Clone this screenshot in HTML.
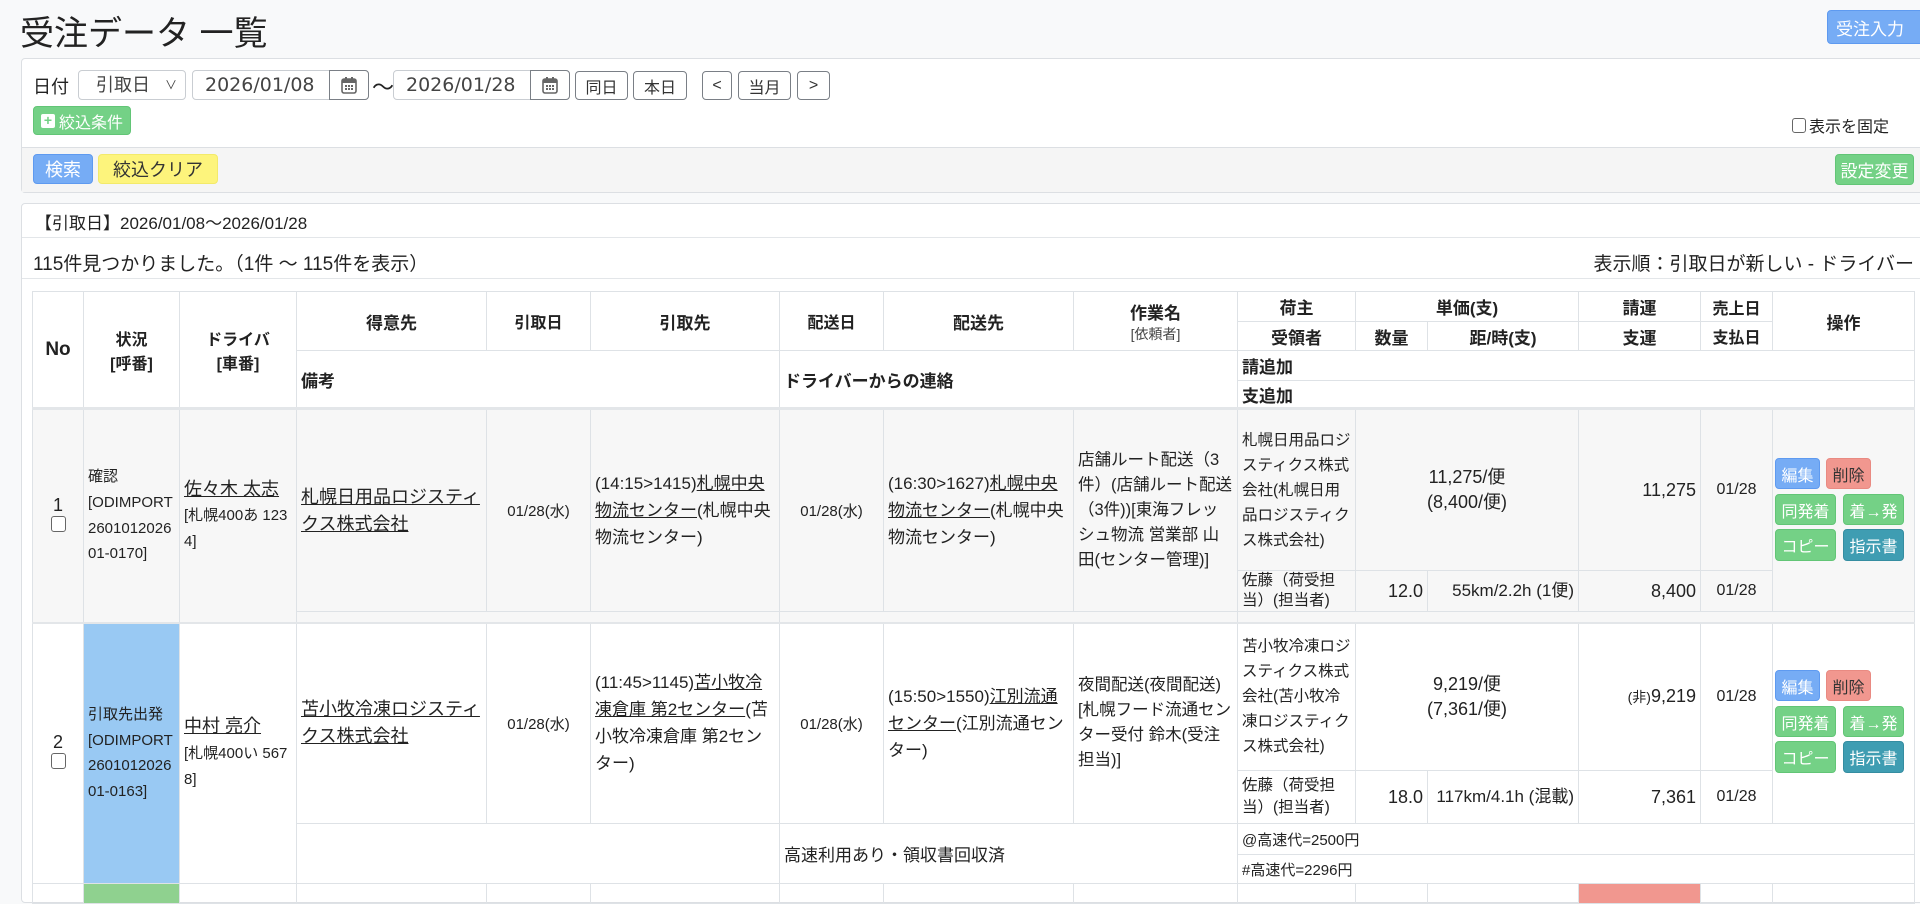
<!DOCTYPE html>
<html><head><meta charset="utf-8"><style>
*{box-sizing:border-box}
body{margin:0;width:1920px;height:887px;overflow:hidden;background:#f8f9fa;font-family:"Liberation Sans","Noto Sans CJK JP",sans-serif;color:#222;position:relative}
.abs{position:absolute}
h1{position:absolute;left:20px;top:6px;margin:0;font-size:34px;font-weight:normal;color:#222}
.btn{position:absolute;border-radius:4px;font-size:16px;display:flex;align-items:center;justify-content:center;white-space:nowrap}
.blue{background:#76acf5;color:#fff;border:1px solid #5e9af0}
.green{background:#74d186;color:#fff;border:1px solid #62c576}
.pink{background:#f1978f;color:#333;border:1px solid #e98a82}
.teal{background:#3f9db2;color:#fff;border:1px solid #358da1}
.yellow{background:#fdf47c;color:#333;border:1px solid #f3ea6a}
.out{background:#fff;border:1px solid #7a7f86;color:#333;font-size:16px}
.panel{position:absolute;left:21px;width:1910px;background:#fff;border:1px solid #dcdfe3;border-radius:4px}
.inp{position:absolute;top:70px;height:30px;border:1px solid #c9cdd2;border-radius:4px;background:#fff;font-size:19px;color:#444;padding-left:12px;line-height:28px;font-family:"DejaVu Sans",sans-serif}
.cal{position:absolute;right:-1px;top:-1px;width:40px;height:30px;border:1px solid #7a7f86;border-radius:0 4px 4px 0;background:#fff;display:flex;align-items:center;justify-content:center}
table{position:absolute;left:32px;top:291px;border-collapse:collapse;table-layout:fixed;width:1882px;font-size:16px}
td,th{border:1px solid #dee2e6;padding:0 4px;overflow:hidden}
th{font-weight:bold;text-align:center;font-size:17px}
th.l{text-align:left}
.sm{font-size:14px;font-weight:normal;color:#444}
.g td{background:#f7f7f7}
.c{text-align:center}.r{text-align:right}
u{text-decoration:underline}
.ba{word-break:break-all;line-height:25.7px;font-size:15px}
.big{font-size:17px;line-height:27px}
.lh{line-height:25px}
</style></head><body>
<h1>受注データ 一覧</h1>
<div class="btn blue" style="left:1827px;top:10px;width:100px;height:34px;font-size:17px;justify-content:flex-start;padding-left:8px">受注入力</div>

<div class="panel" style="top:58px;height:135px;background:#fff">
  <div class="abs" style="left:0;right:0;top:88px;bottom:0;background:#f5f5f5;border-top:1px solid #dcdfe3"></div>
</div>
<div class="abs" style="left:33px;top:73px;font-size:18px">日付</div>
<div class="abs" style="left:78px;top:70px;width:108px;height:30px;border:1px solid #c9cdd2;border-radius:4px;background:#fff;font-size:18px;color:#444;padding-left:17px;line-height:28px">引取日<span style="position:absolute;right:8px;font-size:12px">&#8744;</span></div>
<div class="inp" style="left:192px;width:177px">2026/01/08<div class="cal"><svg width="16" height="18" viewBox="0 0 16 18"><rect x="1" y="3" width="14" height="14" rx="2" fill="none" stroke="#666" stroke-width="1.6"/><rect x="1" y="3" width="14" height="4" fill="#666"/><rect x="4" y="1" width="2" height="4" fill="#666"/><rect x="10" y="1" width="2" height="4" fill="#666"/><g fill="#666"><rect x="4" y="9" width="2" height="2"/><rect x="7" y="9" width="2" height="2"/><rect x="10" y="9" width="2" height="2"/><rect x="4" y="12" width="2" height="2"/><rect x="7" y="12" width="2" height="2"/><rect x="10" y="12" width="2" height="2"/></g></svg></div></div>
<div class="abs" style="left:372px;top:70px;font-size:22px">〜</div>
<div class="inp" style="left:393px;width:177px">2026/01/28<div class="cal"><svg width="16" height="18" viewBox="0 0 16 18"><rect x="1" y="3" width="14" height="14" rx="2" fill="none" stroke="#666" stroke-width="1.6"/><rect x="1" y="3" width="14" height="4" fill="#666"/><rect x="4" y="1" width="2" height="4" fill="#666"/><rect x="10" y="1" width="2" height="4" fill="#666"/><g fill="#666"><rect x="4" y="9" width="2" height="2"/><rect x="7" y="9" width="2" height="2"/><rect x="10" y="9" width="2" height="2"/><rect x="4" y="12" width="2" height="2"/><rect x="7" y="12" width="2" height="2"/><rect x="10" y="12" width="2" height="2"/></g></svg></div></div>
<div class="btn out" style="left:575px;top:71px;width:53px;height:29px">同日</div>
<div class="btn out" style="left:633px;top:71px;width:54px;height:29px">本日</div>
<div class="btn out" style="left:702px;top:71px;width:30px;height:29px">&lt;</div>
<div class="btn out" style="left:738px;top:71px;width:53px;height:29px">当月</div>
<div class="btn out" style="left:797px;top:71px;width:33px;height:29px">&gt;</div>
<div class="btn green" style="left:33px;top:106px;width:98px;height:29px"><span style="display:inline-block;width:14px;height:14px;background:#fff;color:#74d186;font-size:14px;line-height:13px;text-align:center;font-weight:bold;border-radius:2px;margin-right:4px">+</span>絞込条件</div>
<div class="abs" style="left:1792px;top:113px;font-size:16px;display:flex;align-items:center"><span style="display:inline-block;width:14px;height:15px;border:1px solid #666;border-radius:3px;margin-right:3px;background:#fff"></span>表示を固定</div>
<div class="btn blue" style="left:33px;top:154px;width:60px;height:30px;font-size:18px">検索</div>
<div class="btn yellow" style="left:98px;top:154px;width:120px;height:30px;font-size:18px">絞込クリア</div>
<div class="btn green" style="left:1835px;top:154px;width:79px;height:31px;font-size:17px">設定変更</div>

<div class="panel" style="top:203px;height:700px"></div>
<div class="abs" style="left:22px;top:237px;width:1900px;border-top:1px solid #e3e6e9"></div>
<div class="abs" style="left:22px;top:278px;width:1900px;border-top:1px solid #e3e6e9"></div>
<div class="abs" style="left:35px;top:209px;font-size:17px">【引取日】2026/01/08〜2026/01/28</div>
<div class="abs" style="left:33px;top:249px;font-size:19px">115件見つかりました。（1件 〜 115件を表示）</div>
<div class="abs" style="right:6px;top:249px;font-size:19px">表示順：引取日が新しい - ドライバー</div>

<table>
<colgroup><col style="width:51px"><col style="width:96px"><col style="width:117px"><col style="width:190px"><col style="width:104px"><col style="width:189px"><col style="width:104px"><col style="width:190px"><col style="width:164px"><col style="width:118px"><col style="width:72px"><col style="width:151px"><col style="width:122px"><col style="width:72px"><col style="width:142px"></colgroup>
<tr style="height:30px"><th rowspan="4" style="font-size:19px">No</th><th rowspan="4" style="font-size:16px">状況<br>[呼番]</th><th rowspan="4" style="font-size:16px">ドライバ<br>[車番]</th><th rowspan="2">得意先</th><th rowspan="2" style="font-size:16px">引取日</th><th rowspan="2">引取先</th><th rowspan="2" style="font-size:16px">配送日</th><th rowspan="2">配送先</th><th rowspan="2">作業名<br><span class="sm">[依頼者]</span></th><th>荷主</th><th colspan="2">単価(支)</th><th>請運</th><th style="font-size:16px">売上日</th><th rowspan="2">操作</th></tr>
<tr style="height:29px"><th>受領者</th><th>数量</th><th>距/時(支)</th><th>支運</th><th style="font-size:16px">支払日</th></tr>
<tr style="height:30px"><th class="l" colspan="3" rowspan="2">備考</th><th class="l" colspan="3" rowspan="2">ドライバーからの連絡</th><th class="l" colspan="6">請追加</th></tr>
<tr style="height:28px"><th class="l" colspan="6">支追加</th></tr>

<tr class="g" style="height:162px;border-top:3px solid #e3e6e9"><td rowspan="3" class="c" style="font-size:18px">1<br><span style="display:inline-block;width:15px;height:16px;border:1px solid #666;border-radius:3px;background:#fff"></span></td>
<td rowspan="3" class="ba">確認<br>[ODIMPORT260101202601-0170]</td>
<td rowspan="3" class="ba" style="font-size:15px"><u style="font-size:18px">佐々木 太志</u><br>[札幌400あ 1234]</td>
<td rowspan="2" class="big" style="font-size:18px"><u>札幌日用品ロジスティクス株式会社</u></td>
<td rowspan="2" class="c" style="font-size:15px">01/28(水)</td>
<td rowspan="2" class="big">(14:15&gt;1415)<u>札幌中央物流センター</u>(札幌中央物流センター)</td>
<td rowspan="2" class="c" style="font-size:15px">01/28(水)</td>
<td rowspan="2" class="big">(16:30&gt;1627)<u>札幌中央物流センター</u>(札幌中央物流センター)</td>
<td rowspan="2" class="big" style="font-size:16.5px;line-height:25px">店舗ルート配送（3件）(店舗ルート配送（3件))[東海フレッシュ物流 営業部 山田(センター管理)]</td>
<td class="lh" style="font-size:15.5px">札幌日用品ロジスティクス株式会社(札幌日用品ロジスティクス株式会社)</td>
<td colspan="2" class="c lh" style="font-size:18px">11,275/便<br>(8,400/便)</td>
<td class="r" style="font-size:18px">11,275</td><td class="c" style="font-size:16px">01/28</td>
<td rowspan="2" style="position:relative"></td></tr>
<tr class="g" style="height:40px"><td class="lh" style="font-size:15.5px;line-height:20px">佐藤（荷受担当）(担当者)</td><td class="r" style="font-size:18px">12.0</td><td class="r" style="font-size:17px;line-height:20px">55km/2.2h (1便)</td><td class="r" style="font-size:18px">8,400</td><td class="c" style="font-size:16px">01/28</td></tr>
<tr class="g" style="height:11px"><td colspan="3"></td><td colspan="3"></td><td colspan="6"></td></tr>

<tr style="height:148px;border-top:2px solid #e3e6e9"><td rowspan="4" class="c" style="font-size:18px">2<br><span style="display:inline-block;width:15px;height:16px;border:1px solid #666;border-radius:3px;background:#fff"></span></td>
<td rowspan="4" class="ba" style="background:#99c9f3">引取先出発<br>[ODIMPORT260101202601-0163]</td>
<td rowspan="4" class="ba"><u style="font-size:18px">中村 亮介</u><br>[札幌400い 5678]</td>
<td rowspan="2" class="big" style="font-size:18px"><u>苫小牧冷凍ロジスティクス株式会社</u></td>
<td rowspan="2" class="c" style="font-size:15px">01/28(水)</td>
<td rowspan="2" class="big">(11:45&gt;1145)<u>苫小牧冷凍倉庫 第2センター</u>(苫小牧冷凍倉庫 第2センター)</td>
<td rowspan="2" class="c" style="font-size:15px">01/28(水)</td>
<td rowspan="2" class="big">(15:50&gt;1550)<u>江別流通センター</u>(江別流通センター)</td>
<td rowspan="2" class="big" style="font-size:16.5px;line-height:25px">夜間配送(夜間配送)<br>[札幌フード流通センター受付 鈴木(受注担当)]</td>
<td class="lh" style="font-size:15.5px">苫小牧冷凍ロジスティクス株式会社(苫小牧冷凍ロジスティクス株式会社)</td>
<td colspan="2" class="c lh" style="font-size:18px">9,219/便<br>(7,361/便)</td>
<td class="r" style="font-size:18px"><span style="font-size:14px">(非)</span>9,219</td><td class="c" style="font-size:16px">01/28</td>
<td rowspan="2"></td></tr>
<tr style="height:53px"><td class="lh" style="font-size:15.5px;line-height:22px">佐藤（荷受担当）(担当者)</td><td class="r" style="font-size:18px">18.0</td><td class="r" style="font-size:17px;line-height:24px">117km/4.1h (混載)</td><td class="r" style="font-size:18px">7,361</td><td class="c" style="font-size:16px">01/28</td></tr>
<tr style="height:31px"><td colspan="3" rowspan="2"></td><td colspan="3" rowspan="2" style="font-size:17px">高速利用あり・領収書回収済</td><td colspan="6" style="font-size:15px">@高速代=2500円</td></tr>
<tr style="height:29px"><td colspan="6" style="font-size:15px">#高速代=2296円</td></tr>
<tr style="height:20px"><td></td><td style="background:#8fd18f"></td><td></td><td></td><td></td><td></td><td></td><td></td><td></td><td></td><td></td><td></td><td style="background:#f1978f"></td><td></td><td></td></tr>
</table>

<div class="btn blue" style="left:1775px;top:458px;width:45px;height:31px">編集</div>
<div class="btn pink" style="left:1826px;top:458px;width:45px;height:31px">削除</div>
<div class="btn green" style="left:1775px;top:494px;width:61px;height:31px">同発着</div>
<div class="btn green" style="left:1843px;top:494px;width:61px;height:31px">着→発</div>
<div class="btn green" style="left:1775px;top:529px;width:61px;height:32px">コピー</div>
<div class="btn teal" style="left:1843px;top:529px;width:61px;height:32px">指示書</div>

<div class="btn blue" style="left:1775px;top:670px;width:45px;height:31px">編集</div>
<div class="btn pink" style="left:1826px;top:670px;width:45px;height:31px">削除</div>
<div class="btn green" style="left:1775px;top:706px;width:61px;height:31px">同発着</div>
<div class="btn green" style="left:1843px;top:706px;width:61px;height:31px">着→発</div>
<div class="btn green" style="left:1775px;top:741px;width:61px;height:32px">コピー</div>
<div class="btn teal" style="left:1843px;top:741px;width:61px;height:32px">指示書</div>
</body></html>
